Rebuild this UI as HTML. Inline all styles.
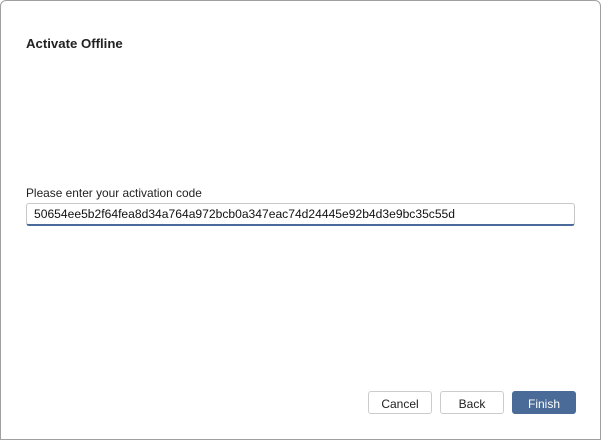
<!DOCTYPE html>
<html><head><style>
body{margin:0;width:601px;height:440px;background:#fff;font-family:"Liberation Sans",sans-serif;position:relative;overflow:hidden}
.frame{position:absolute;left:0;top:0;width:599px;height:438px;border:1px solid #a0a0a0;border-radius:6px 6px 0 0}
.title{position:absolute;left:26px;top:36px;font-size:13.2px;font-weight:bold;color:#222}
.lbl{position:absolute;left:26px;top:186px;font-size:11.9px;color:#222}
.inp{position:absolute;left:26px;top:203px;height:20px;border:1px solid #c8c8c8;border-bottom:2px solid #4a6a9a;border-radius:3px;font-size:12.1px;line-height:21px;padding-left:7px;box-sizing:content-box;color:#111;width:540px}
.btn{position:absolute;top:391px;width:62px;height:21px;border:1px solid #ccc;border-radius:3px;background:#fff;font-size:12px;text-align:center;line-height:24px;color:#222}
.fin{background:#4a6a98;border-color:#4a6a98;color:#fff}
</style></head><body>
<div class="frame"></div>
<div class="title">Activate Offline</div>
<div class="lbl">Please enter your activation code</div>
<div class="inp">50654ee5b2f64fea8d34a764a972bcb0a347eac74d24445e92b4d3e9bc35c55d</div>
<div class="btn" style="left:368px">Cancel</div>
<div class="btn" style="left:440px">Back</div>
<div class="btn fin" style="left:512px">Finish</div>
</body></html>
